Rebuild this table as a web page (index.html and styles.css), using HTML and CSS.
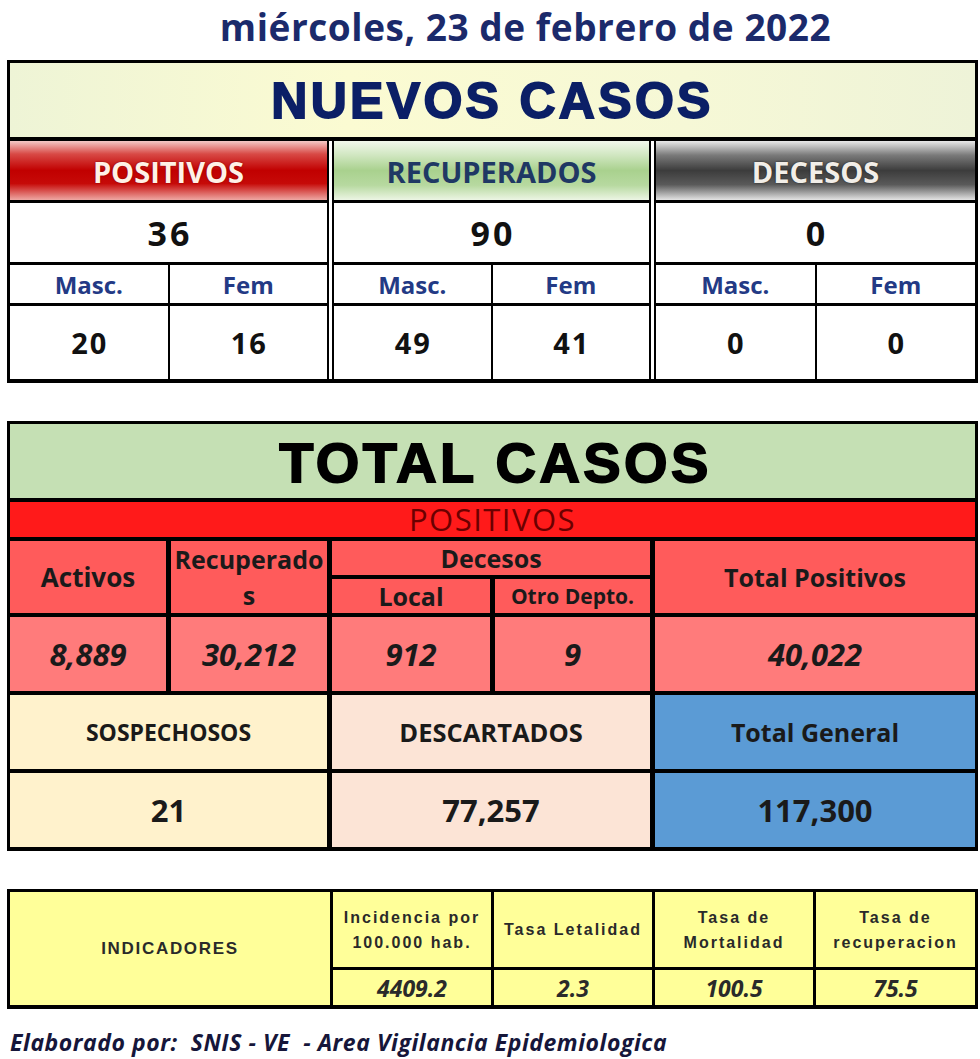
FILE: index.html
```html
<!DOCTYPE html>
<html lang="es">
<head>
<meta charset="utf-8">
<title>Nuevos casos - 23 de febrero de 2022</title>
<link rel="stylesheet" href="styles.css">
</head>
<body>
<div class="page">
  <h1 class="date">miércoles, 23 de febrero de 2022</h1>

  <section class="nuevos">
    <div class="nuevos-title">NUEVOS CASOS</div>
    <div class="groups">
      <div class="group">
        <div class="g-head pos">POSITIVOS</div>
        <div class="g-num">36</div>
        <div class="g-sex">Masc.</div>
        <div class="g-sex">Fem</div>
        <div class="g-val">20</div>
        <div class="g-val">16</div>
      </div>
      <div class="group">
        <div class="g-head rec">RECUPERADOS</div>
        <div class="g-num">90</div>
        <div class="g-sex">Masc.</div>
        <div class="g-sex">Fem</div>
        <div class="g-val">49</div>
        <div class="g-val">41</div>
      </div>
      <div class="group">
        <div class="g-head dec">DECESOS</div>
        <div class="g-num">0</div>
        <div class="g-sex">Masc.</div>
        <div class="g-sex">Fem</div>
        <div class="g-val">0</div>
        <div class="g-val">0</div>
      </div>
    </div>
  </section>

  <section class="total">
    <div class="t-title">TOTAL CASOS</div>
    <div class="t-band">POSITIVOS</div>
    <div class="t-h tall act">Activos</div>
    <div class="t-h tall recup">Recuperado<br>s</div>
    <div class="t-h dec-h">Decesos</div>
    <div class="t-h tall">Total Positivos</div>
    <div class="t-h sub">Local</div>
    <div class="t-h sub small">Otro Depto.</div>
    <div class="t-v">8,889</div>
    <div class="t-v">30,212</div>
    <div class="t-v">912</div>
    <div class="t-v">9</div>
    <div class="t-v">40,022</div>
    <div class="t-s sosp span2 lbl-s">SOSPECHOSOS</div>
    <div class="t-s desc span2 lbl-d">DESCARTADOS</div>
    <div class="t-s gen lbl-g">Total General</div>
    <div class="t-s sosp span2 num">21</div>
    <div class="t-s desc span2 num">77,257</div>
    <div class="t-s gen num">117,300</div>
  </section>

  <section class="ind">
    <div class="i-main">INDICADORES</div>
    <div class="i-h">Incidencia por<br>100.000 hab.</div>
    <div class="i-h">Tasa Letalidad</div>
    <div class="i-h">Tasa de<br>Mortalidad</div>
    <div class="i-h">Tasa de<br>recuperacion</div>
    <div class="i-v">4409.2</div>
    <div class="i-v">2.3</div>
    <div class="i-v">100.5</div>
    <div class="i-v">75.5</div>
  </section>

  <p class="footer">Elaborado por:&nbsp; SNIS - VE&nbsp; - Area Vigilancia Epidemiologica</p>
</div>
</body>
</html>
```

FILE: styles.css
```css
* { box-sizing: border-box; }

html, body {
  margin: 0;
  padding: 0;
  background: #ffffff;
}

body {
  font-family: "Open Sans", "Lato", sans-serif;
  color: #000;
}

.page {
  width: 980px;
  padding: 0 2px 0 7px;
}

.date {
  margin: 0;
  padding: 4px 0 0 66px;
  height: 60px;
  text-align: center;
  font-size: 37px;
  font-weight: 700;
  letter-spacing: 0.55px;
  color: #1b2a6b;
  line-height: 46px;
}

/* ---------- NUEVOS CASOS ---------- */
.nuevos {
  border: 3px solid #000;
  border-bottom-width: 4px;
  background: #000;
  display: flex;
  flex-direction: column;
  gap: 4px;
  width: 971px;
}

.nuevos-title {
  height: 74px;
  background: linear-gradient(90deg, #eef4d6 0%, #fbfbd2 35%, #f6f8d6 70%, #eef3d8 100%);
  text-align: center;
  font-family: "Liberation Sans", Arial, sans-serif;
  font-weight: 700;
  font-size: 50px;
  line-height: 76px;
  letter-spacing: 3.3px;
  color: #0b1f66;
  -webkit-text-stroke: 1.8px #0b1f66;
}

.groups {
  display: grid;
  grid-template-columns: 319px 319px 1fr;
  column-gap: 3px;
  background: #fff;
}

.group {
  display: grid;
  grid-template-columns: 1fr 1fr;
  grid-template-rows: 59px 59px 38px 73px;
  gap: 3px 2px;
  background: #000;
  border-left: 2px solid #000;
  border-right: 2px solid #000;
}
.group:first-child { border-left: 0; }
.group:last-child { border-right: 0; }

.group > div {
  display: flex;
  align-items: center;
  justify-content: center;
  background: #fff;
  font-weight: 700;
}

.group > .g-head {
  grid-column: span 2;
  font-size: 29px;
  padding-top: 2px;
}
.group > .g-head.pos {
  background: linear-gradient(180deg, #f4c9c6 0%, #d84a46 22%, #c10000 50%, #c60a08 72%, #eea8a4 100%);
  color: #fff1e6;
  text-shadow: 0 0 2px #7a0000;
}
.group > .g-head.rec {
  background: linear-gradient(180deg, #f2f8ec 0%, #cfe6bf 25%, #a9d18e 50%, #b7d9a0 75%, #ecf5e4 100%);
  color: #1f3864;
}
.group > .g-head.dec {
  background: linear-gradient(180deg, #e8e8e8 0%, #7a7a7a 24%, #3c3c3c 50%, #5a5a5a 74%, #e4e4e4 100%);
  color: #f2eee8;
  text-shadow: 0 0 2px #202020;
}

.group > .g-num {
  grid-column: span 2;
  font-size: 34px;
  letter-spacing: 3px;
  padding-left: 3px;
  color: #111;
}

.group > .g-sex {
  font-size: 24px;
  color: #233a85;
}

.group > .g-val {
  font-size: 29px;
  letter-spacing: 2px;
  padding-left: 2px;
  color: #111;
}

/* ---------- TOTAL CASOS ---------- */
.total {
  margin-top: 38px;
  width: 971px;
  border: 3px solid #000;
  border-bottom-width: 4px;
  background: #000;
  display: grid;
  grid-template-columns: 156px 156px 158px 155px 1fr;
  grid-template-rows: 74px 35px 34px 34px 74px 74px 74px;
  gap: 4px 5px;
}

.total > div {
  display: flex;
  align-items: center;
  justify-content: center;
  text-align: center;
  font-weight: 700;
  color: #1a1a1a;
}

.t-title {
  grid-column: 1 / -1;
  background: #c5e0b4;
  font-family: "Liberation Sans", Arial, sans-serif;
  font-size: 56px;
  letter-spacing: 3.4px;
  -webkit-text-stroke: 1.8px #000;
  color: #000 !important;
  padding: 2px 0 0 6px;
}

.t-band {
  grid-column: 1 / -1;
  background: #ff1a1a;
  font-weight: 400 !important;
  font-size: 31px;
  line-height: 35px;
  letter-spacing: 1.5px;
  color: #6b0000 !important;
  padding: 0;
}

.t-h {
  background: #ff5b5b;
  font-size: 25px;
}
.t-h.tall { grid-row: span 2; }
.t-h.act { font-size: 26px; }
.t-h.recup { line-height: 36px; font-size: 25px; padding-top: 0; }
.t-h.dec-h { grid-column: span 2; }
.t-h.small { font-size: 21px; }

.t-v {
  background: #ff7b7b;
  font-size: 31px;
  font-style: italic;
}

.t-s.span2 { grid-column: span 2; }
.t-s.sosp { background: #fff2cc; }
.t-s.desc { background: #fce4d6; }
.t-s.gen { background: #5b9bd5; }
.t-s.lbl-s { font-size: 23px; }
.t-s.lbl-d { font-size: 25.5px; }
.t-s.lbl-g { font-size: 25px; }
.t-s.num { font-size: 31px; }

/* ---------- INDICADORES ---------- */
.ind {
  margin-top: 38px;
  width: 971px;
  border: 3px solid #000;
  border-bottom-width: 4px;
  background: #000;
  display: grid;
  grid-template-columns: 320px 158px 158px 158px 1fr;
  grid-template-rows: 75px 35px;
  gap: 3px;
}

.ind > div {
  background: #ffff99;
  display: flex;
  align-items: center;
  justify-content: center;
  text-align: center;
  color: #2a2a2a;
}

.i-main {
  grid-row: span 2;
  font-family: "Liberation Sans", Arial, sans-serif;
  font-weight: 700;
  font-size: 17px;
  letter-spacing: 1.7px;
}

.i-h {
  font-family: "Liberation Sans", Arial, sans-serif;
  font-weight: 700;
  font-size: 16px;
  letter-spacing: 2px;
  line-height: 25px;
}

.i-v {
  font-weight: 700;
  font-style: italic;
  font-size: 23px;
}

.footer {
  margin: 17px 0 0 3px;
  font-weight: 700;
  font-style: italic;
  font-size: 23px;
  letter-spacing: 0.55px;
  color: #16163a;
}
```
